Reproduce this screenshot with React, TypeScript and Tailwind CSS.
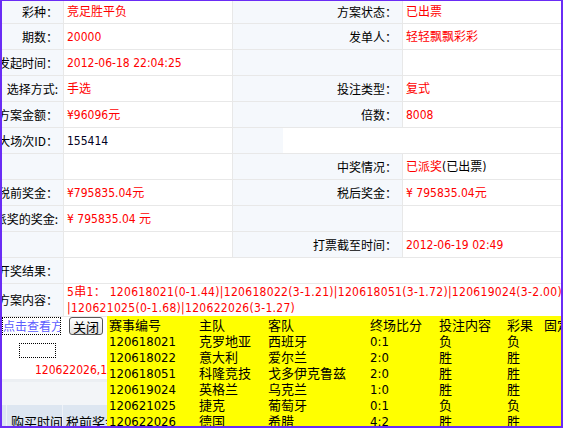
import React from "react";

const FONT = '"DejaVu Sans Condensed", "Noto Sans CJK SC", sans-serif';
const CJK = '"Noto Sans CJK SC", "DejaVu Sans Condensed", sans-serif';

const LBL =
  "flex items-center justify-end pr-[5px] bg-[#f5f8fc] border-b border-r border-[#e8e8e8] whitespace-nowrap overflow-hidden text-black";
const VAL =
  "flex items-center pl-[3px] bg-white border-b border-r border-[#e8e8e8] whitespace-nowrap overflow-hidden text-[#ff0000]";
const VAL4 =
  "flex items-center pl-[3px] bg-white border-b border-[#e8e8e8] whitespace-nowrap overflow-hidden text-[#ff0000]";

function L({ children }: { children?: React.ReactNode }) {
  return (
    <div className={LBL} style={{ fontFamily: CJK }}>
      {children}
    </div>
  );
}

const header = ["赛事编号", "主队", "客队", "终场比分", "投注内容", "彩果", "固定奖金"];
const rows = [
  ["120618021", "克罗地亚", "西班牙", "0:1", "负", "负", ""],
  ["120618022", "意大利", "爱尔兰", "2:0", "胜", "胜", ""],
  ["120618051", "科隆竞技", "戈多伊克鲁兹", "2:0", "胜", "胜", ""],
  ["120619024", "英格兰", "乌克兰", "1:0", "胜", "胜", ""],
  ["120621025", "捷克", "葡萄牙", "0:1", "负", "负", ""],
  ["120622026", "德国", "希腊", "4:2", "胜", "胜", ""],
];

export default function App() {
  return (
    <div
      className="relative w-[563px] h-[428px] overflow-hidden bg-white border-x-2 border-b-2 border-t border-[#6a2cf5] text-[12px] leading-none"
      style={{ fontFamily: FONT }}
    >
      <div className="grid grid-cols-[62px_169px_170px_158px] grid-rows-[23px_26px_26px_26px_26px_26px_26px_26px_26px_26px_26px_33px]">
        <L>彩种：</L>
        <div className={VAL}>竞足胜平负</div>
        <L>方案状态：</L>
        <div className={VAL4}>已出票</div>

        <L>期数：</L>
        <div className={VAL}>20000</div>
        <L>发单人：</L>
        <div className={VAL4}>轻轻飘飘彩彩</div>

        <L>发起时间：</L>
        <div className={VAL}>2012-06-18 22:04:25</div>
        <L />
        <div className={VAL4} />

        <L>选择方式:</L>
        <div className={VAL}>手选</div>
        <L>投注类型：</L>
        <div className={VAL4}>复式</div>

        <L>方案金额：</L>
        <div className={VAL}>¥96096元</div>
        <L>倍数：</L>
        <div className={VAL4}>8008</div>

        <L>大场次ID：</L>
        <div className={VAL + " !text-[#000022]"}>155414</div>
        <div className="col-span-2 border-b border-[#e8e8e8] bg-[linear-gradient(to_right,#f5f8fc_50px,#ffffff_50px)]" />

        <L />
        <div className={VAL} />
        <L>中奖情况：</L>
        <div className={VAL4}>
          已派奖<span className="text-black">(已出票)</span>
        </div>

        <L>税前奖金：</L>
        <div className={VAL}>¥795835.04元</div>
        <L>税后奖金：</L>
        <div className={VAL4}>¥ 795835.04元</div>

        <L>派奖的奖金:</L>
        <div className={VAL}>¥ 795835.04 元</div>
        <L />
        <div className={VAL4} />

        <L />
        <div className={VAL} />
        <L>打票截至时间：</L>
        <div className={VAL4}>2012-06-19 02:49</div>

        <L>开奖结果：</L>
        <div className="col-span-3 bg-white border-b border-[#e8e8e8]" />

        <L>方案内容：</L>
        <div className="col-span-3 flex flex-col justify-center pl-[3px] bg-white border-b border-[#e8e8e8] text-[#ff0000] whitespace-nowrap overflow-hidden leading-[16px] tracking-[0.3px]">
          <div>
            5串1：&nbsp;120618021(0-1.44)|120618022(3-1.21)|120618051(3-1.72)|120619024(3-2.00)
          </div>
          <div>|120621025(0-1.68)|120622026(3-1.27)</div>
        </div>
      </div>

      {/* lower area */}
      <div className="flex items-center gap-[8px] h-[18px]">
        <div
          className="w-[59px] h-[18px] border border-dotted border-black overflow-hidden whitespace-nowrap text-[#5c5cff] flex items-center"
          style={{ fontFamily: CJK }}
        >
          点击查看方案详情
        </div>
        <button
          className="h-[18px] w-[34px] rounded-[3px] border border-[#555] bg-[linear-gradient(#ffffff,#e4e4e4)] text-[13px] text-black flex items-center justify-center"
          style={{ fontFamily: CJK }}
        >
          关闭
        </button>
      </div>
      <div className="ml-[17px] mt-[8px] w-[37px] h-[15px] border border-dotted border-black" />
      <div className="pl-[33px] mt-[6px] h-[14px] text-[#ff0000] text-[12px] whitespace-nowrap">
        120622026,120621025
      </div>
      <div className="h-[3px] mt-[1px] bg-[#eceff3]" />
      <div className="h-[23px] bg-[#f3f5f8]" />
      <div
        className="grid grid-cols-[5px_56px_120px] h-[23px] bg-[#dde6f1] text-black text-[13px]"
        style={{ fontFamily: CJK }}
      >
        <div className="border-r border-[#eef2f8]" />
        <div className="border-r border-[#eef2f8] pl-[4px] pt-[10px] whitespace-nowrap overflow-hidden">购买时间</div>
        <div className="pl-[3px] pt-[10px] whitespace-nowrap overflow-hidden">税前奖金</div>
      </div>

      {/* yellow overlay */}
      <div
        className="absolute left-[105px] top-[315px] right-0 bottom-0 bg-[#ffff00] overflow-hidden pl-[2px] text-[13px] text-black"
        style={{ fontFamily: FONT }}
      >
        <div className="grid grid-cols-[90px_69px_102px_69px_68px_37px_60px] grid-rows-[17px_16px_16px_16px_16px_16px_16px] items-center whitespace-nowrap">
          {header.map((h) => (
            <div key={h} style={{ fontFamily: CJK }}>
              {h}
            </div>
          ))}
          {rows.map((r) =>
            r.map((c, i) => <div key={r[0] + "-" + i}>{c}</div>)
          )}
        </div>
      </div>
    </div>
  );
}
